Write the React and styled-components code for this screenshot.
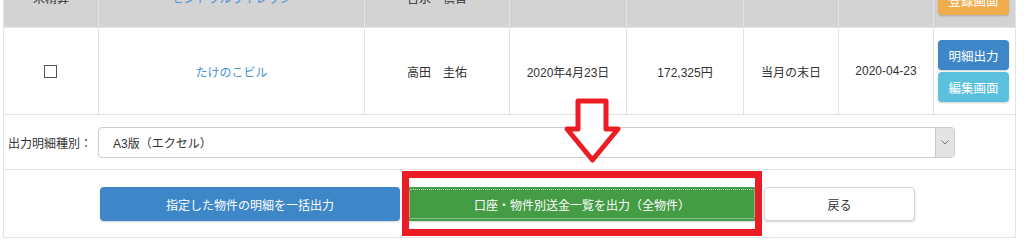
import React from 'react';
import styled, { createGlobalStyle } from 'styled-components';

const GlobalStyle = createGlobalStyle`
  html, body {
    margin: 0;
    padding: 0;
    background: #ffffff;
    overflow: hidden;
  }
  body {
    font-family: "Liberation Sans", "Noto Sans CJK JP", sans-serif;
    font-size: 12px;
    color: #333333;
  }
`;

const Page = styled.div`
  position: relative;
  width: 1013px;
  margin: -33px 0 0 3px;
`;

const Table = styled.div`
  display: grid;
  grid-template-columns: 95px 266px 145px 117px 117px 95px 95px 82px;
  border-left: 1px solid #e3e3e3;
`;

// height passed is the content height; border is added on top of it
const Cell = styled.div`
  display: flex;
  align-items: center;
  justify-content: center;
  box-sizing: border-box;
  height: ${(p) => p.$height + 1}px;
  background: ${(p) => (p.$head ? '#d3d3d3' : '#ffffff')};
  border-right: 1px solid ${(p) => (p.$head ? '#e4e4e4' : '#e3e3e3')};
  border-bottom: 1px solid #e3e3e3;
  white-space: nowrap;
`;

const ActionCell = styled(Cell)`
  flex-direction: column;
  justify-content: ${(p) => (p.$head ? 'flex-end' : 'center')};
  align-items: flex-start;
  padding: ${(p) => (p.$head ? '0 0 12px 4px' : '0 0 0 4px')};
  gap: 2px;
`;

const Link = styled.span`
  color: #4a90d6;
`;

const Check = styled.span`
  display: block;
  width: 11px;
  height: 11px;
  margin-left: -2px;
  border: 1px solid #555555;
  background: #ffffff;
`;

const colors = {
  orange: '#f0ad4e',
  blue: '#3d87c9',
  info: '#5bc0de',
  green: '#449d44',
};

const SmallButton = styled.div`
  width: 71px;
  height: 30px;
  display: flex;
  align-items: center;
  justify-content: center;
  border-radius: 4px;
  background: ${(p) => colors[p.$tone]};
  color: #ffffff;
  font-family: "Noto Sans CJK JP", sans-serif;
  font-size: 12.5px;
  box-shadow: 0 1px 2px rgba(0, 0, 0, 0.2);
`;

const Panel = styled.div`
  border-left: 1px solid #e3e3e3;
  border-right: 1px solid #e3e3e3;
  border-bottom: 1px solid #e3e3e3;
`;

const SelectRow = styled.div`
  display: flex;
  align-items: center;
  height: 54px;
  padding-left: 4px;
  border-bottom: 1px solid #e3e3e3;
`;

const Label = styled.span`
  width: 90px;
  font-family: "Noto Sans CJK JP", sans-serif;
`;

const Select = styled.div`
  display: flex;
  align-items: center;
  width: 857px;
  height: 31px;
  box-sizing: border-box;
  border: 1px solid #cccccc;
  border-radius: 4px;
  padding-left: 14px;
  font-family: "Liberation Sans", "Noto Sans CJK JP", sans-serif;
`;

const SelectText = styled.span`
  flex: 1;
`;

const Caret = styled.span`
  display: flex;
  align-items: center;
  justify-content: center;
  width: 18px;
  height: 29px;
  background: #e3e3e3;
  border-left: 1px solid #c8c8c8;
  border-radius: 0 3px 3px 0;
`;

const ButtonRow = styled.div`
  position: relative;
  display: flex;
  align-items: flex-start;
  gap: 7px;
  height: 67px;
  box-sizing: border-box;
  padding: 17px 0 0 96px;
`;

const Button = styled.div`
  width: ${(p) => p.$width}px;
  height: 34px;
  display: flex;
  align-items: center;
  justify-content: center;
  box-sizing: border-box;
  border-radius: 4px;
  font-family: "Noto Sans CJK JP", sans-serif;
  font-size: 12px;
  color: ${(p) => (p.$tone === 'plain' ? '#333333' : '#ffffff')};
  background: ${(p) => (p.$tone === 'plain' ? '#ffffff' : colors[p.$tone])};
  border: 1px solid ${(p) => (p.$tone === 'plain' ? '#d6d6d6' : 'transparent')};
  box-shadow: 0 1px 2px rgba(0, 0, 0, 0.18);
  outline: ${(p) => (p.$focus ? '1px dotted rgba(255,255,255,0.7)' : 'none')};
  outline-offset: -3px;
`;

const RedFrame = styled.div`
  position: absolute;
  left: 398px;
  top: 1px;
  width: 360px;
  height: 65px;
  box-sizing: border-box;
  border: 7px solid #ec1c24;
  pointer-events: none;
`;

const Arrow = styled.svg`
  position: absolute;
  left: 558px;
  top: 131px;
`;

const DownArrow = () => (
  <Arrow width="64" height="70" viewBox="0 0 64 70">
    <path
      d="M17 3 H45 V31 H57 L31.5 62 L6 31 H17 Z"
      fill="#ffffff"
      stroke="#ec1c24"
      strokeWidth="5"
      strokeLinejoin="round"
    />
  </Arrow>
);

export default function App() {
  return (
    <>
      <GlobalStyle />
      <Page>
        <Table>
          <Cell $head $height={60}>未精算</Cell>
          <Cell $head $height={60}><Link>セントラルヴィレッジ</Link></Cell>
          <Cell $head $height={60}>吉永　慎吾</Cell>
          <Cell $head $height={60} />
          <Cell $head $height={60} />
          <Cell $head $height={60} />
          <Cell $head $height={60} />
          <ActionCell $head $height={60}>
            <SmallButton $tone="orange">登録画面</SmallButton>
          </ActionCell>

          <Cell $height={86}><Check /></Cell>
          <Cell $height={86}><Link>たけのこビル</Link></Cell>
          <Cell $height={86}>高田　圭佑</Cell>
          <Cell $height={86}>2020年4月23日</Cell>
          <Cell $height={86}>172,325円</Cell>
          <Cell $height={86}>当月の末日</Cell>
          <Cell $height={86}>2020-04-23</Cell>
          <ActionCell $height={86}>
            <SmallButton $tone="blue">明細出力</SmallButton>
            <SmallButton $tone="info">編集画面</SmallButton>
          </ActionCell>
        </Table>

        <Panel>
          <SelectRow>
            <Label>出力明細種別：</Label>
            <Select>
              <SelectText>A3版（エクセル）</SelectText>
              <Caret>
                <svg width="8" height="5" viewBox="0 0 8 5">
                  <path d="M0.5 0.5 L4 4 L7.5 0.5" fill="none" stroke="#777" strokeWidth="1" />
                </svg>
              </Caret>
            </Select>
          </SelectRow>
          <ButtonRow>
            <Button $tone="blue" $width={300}>指定した物件の明細を一括出力</Button>
            <Button $tone="green" $width={350} $focus>口座・物件別送金一覧を出力（全物件）</Button>
            <Button $tone="plain" $width={151}>戻る</Button>
            <RedFrame />
          </ButtonRow>
        </Panel>

        <DownArrow />
      </Page>
    </>
  );
}
